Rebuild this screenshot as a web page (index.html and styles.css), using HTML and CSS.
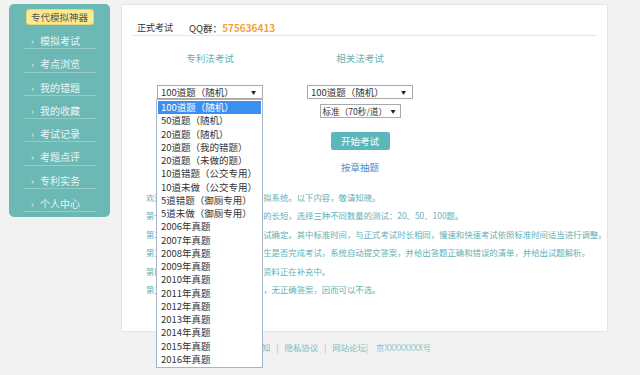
FILE: index.html
```html
<!DOCTYPE html>
<html lang="zh-CN">
<head>
  <meta charset="UTF-8">
  <meta name="viewport" content="width=device-width, initial-scale=1.0">
  <title>专代模拟神器 - 正式考试</title>
  <link rel="stylesheet" href="styles.css">
</head>
<body>
  <div class="page">
    <aside class="sidebar">
      <div class="brand">专代模拟神器</div>
      <ul class="menu">
        <li><span class="chev">›</span>模拟考试</li>
        <li><span class="chev">›</span>考点浏览</li>
        <li><span class="chev">›</span>我的错题</li>
        <li><span class="chev">›</span>我的收藏</li>
        <li><span class="chev">›</span>考试记录</li>
        <li><span class="chev">›</span>考题点评</li>
        <li><span class="chev">›</span>专利实务</li>
        <li><span class="chev">›</span>个人中心</li>
      </ul>
    </aside>

    <main class="panel">
      <div class="panel-head">
        <span class="head-title">正式考试</span>
        <span class="qq">QQ群：<b>575636413</b></span>
      </div>

      <div class="exam-cols">
        <div class="col">
          <h3 class="col-title">专利法考试</h3>
          <div class="select-wrap">
            <div class="select wide">100道题（随机）<span class="arrow">▼</span></div>
            <!-- opened dropdown -->
            <ul class="options">
              <li class="active">100道题（随机）</li>
              <li>50道题（随机）</li>
              <li>20道题（随机）</li>
              <li>20道题（我的错题）</li>
              <li>20道题（未做的题）</li>
              <li>10道错题（公交专用）</li>
              <li>10道未做（公交专用）</li>
              <li>5道错题（御厕专用）</li>
              <li>5道未做（御厕专用）</li>
              <li>2006年真题</li>
              <li>2007年真题</li>
              <li>2008年真题</li>
              <li>2009年真题</li>
              <li>2010年真题</li>
              <li>2011年真题</li>
              <li>2012年真题</li>
              <li>2013年真题</li>
              <li>2014年真题</li>
              <li>2015年真题</li>
              <li>2016年真题</li>
            </ul>
          </div>
        </div>

        <div class="col">
          <h3 class="col-title">相关法考试</h3>
          <div class="select wide">100道题（随机）<span class="arrow">▼</span></div>
          <div class="select narrow">标准（70秒/道）<span class="arrow">▼</span></div>
          <button class="btn">开始考试</button>
          <a class="chapter-link" href="#">按章抽题</a>
        </div>
      </div>

      <div class="notes">
        <p>欢迎使用专利代理人资格考试模拟系统。以下内容，敬请知晓。</p>
        <p>第一，考生可根据自身空闲时间的长短，选择三种不同数量的测试：20、50、100题。</p>
        <p>第二，考试时间根据所选择的测试确定。其中标准时间，与正式考试时长相同，慢速和快速考试依照标准时间适当进行调整。</p>
        <p>第三，考试时间到达后，无论考生是否完成考试，系统自动提交答案，并给出答题正确和错误的清单，并给出试题解析。</p>
        <p>第四，专利实务部分题目较少，资料正在补充中。</p>
        <p>第五，少数试题因法律法规修改，无正确答案，因而可以不选。</p>
      </div>
    </main>
  </div>

  <footer class="footer">
    <a href="#">关于我们</a><span class="sep">|</span><a href="#">用户须知</a><span class="sep">|</span><a href="#">隐私协议</a><span class="sep">|</span><a href="#">网站论坛</a><span class="sep tight">|</span><span>京XXXXXXXX号</span>
  </footer>
</body>
</html>
```

FILE: styles.css
```css
html {
  background: #f2f2f2;
}
body {
  margin: 0;
  min-height: 375px;
  background: #f2f2f2;
  font-family: "Noto Sans CJK SC", "Noto Sans", sans-serif;
  color: #333;
}
ul {
  margin: 0;
  padding: 0;
  list-style: none;
}
a {
  text-decoration: none;
}
.page {
  display: flex;
  align-items: flex-start;
  gap: 11px;
  padding: 4px 0 0 9px;
}

/* sidebar */
.sidebar {
  width: 101px;
  background: #6cb8b5;
  border-radius: 5px;
  padding: 5px 0 5px;
  box-sizing: border-box;
}
.brand {
  width: 68px;
  height: 16px;
  margin: 0 auto 1px;
  background: #fde98e;
  border: 1px solid #e9d47c;
  border-radius: 3px;
  font-size: 9.5px;
  line-height: 14px;
  text-align: center;
  color: #555;
  box-sizing: border-box;
}
.menu {
  margin: 0 14px 0 15px;
}
.menu li {
  height: 23.3px;
  padding-top: 7px;
  line-height: 16px;
  border-bottom: 1px solid #93cdca;
  color: #eaf5f4;
  font-size: 10px;
  box-sizing: border-box;
}
.chev {
  display: inline-block;
  width: 16px;
  padding-left: 7px;
  box-sizing: border-box;
  font-size: 9px;
}

/* main panel */
.panel {
  width: 487px;
  height: 328px;
  background: #fff;
  border: 1px solid #e4e4e4;
  box-sizing: border-box;
  padding: 0 10px;
}
.panel-head {
  height: 31px;
  padding: 17px 0 0 5px;
  box-sizing: border-box;
  border-bottom: 1px solid #e6e6e6;
  font-size: 9px;
  line-height: 12px;
  display: flex;
  gap: 16px;
}
.qq {
  font-size: 9.5px;
}
.qq b {
  color: #f4a23a;
  font-size: 10px;
}
.exam-cols {
  display: flex;
  margin-left: 3px;
}
.col {
  width: 150px;
  display: flex;
  flex-direction: column;
  align-items: center;
}
.col-title {
  margin: 16px 0 0;
  font-weight: normal;
  font-size: 9.5px;
  line-height: 12px;
  color: #62b0b6;
}
.select-wrap {
  position: relative;
  margin-top: 21px;
}
.col > .select.wide {
  margin-top: 21px;
}
.select {
  position: relative;
  height: 14px;
  border: 1px solid #a9a9a9;
  box-sizing: border-box;
  font-size: 9.5px;
  line-height: 12px;
  padding-left: 3px;
  color: #333;
  background: #fff;
  white-space: nowrap;
}
.select.wide {
  width: 106px;
}
.select.narrow {
  width: 81px;
  margin-top: 5px;
  font-size: 8.6px;
  padding-left: 2px;
}
.arrow {
  position: absolute;
  right: 6px;
  top: 0;
  font-size: 5px;
  line-height: 12px;
  color: #222;
}
.narrow .arrow {
  right: 4px;
}
.options {
  position: absolute;
  left: -1px;
  top: 14px;
  width: 107px;
  padding: 1px;
  background: #fff;
  border: 1px solid #a7b5c8;
  box-sizing: border-box;
  z-index: 5;
}
.options li {
  height: 13.25px;
  line-height: 13.25px;
  padding-left: 3px;
  font-size: 9.5px;
  color: #333;
  white-space: nowrap;
}
.options li.active {
  background: #3b8ff0;
  color: #fff;
}
.btn {
  margin-top: 14px;
  width: 59px;
  height: 18px;
  padding: 0;
  border: none;
  border-radius: 2px;
  background: #5bb7bc;
  color: #fff;
  font-family: inherit;
  font-size: 9.5px;
}
.chapter-link {
  margin-top: 11px;
  font-size: 9.5px;
  line-height: 12px;
  color: #4e8ac6;
}
.notes {
  margin: 15px 0 0 14px;
}
.notes p {
  margin: 0;
  font-size: 8.4px;
  line-height: 18.4px;
  color: #62b0b6;
  white-space: nowrap;
}

/* footer */
.footer {
  margin: 9px 0 0 189px;
  font-size: 8.4px;
  line-height: 12px;
  color: #8cc3c6;
}
.footer a {
  color: #7dbcc1;
}
.sep {
  margin: 0 6px;
}
.sep.tight {
  margin-left: 0;
  margin-right: 8px;
}
```
